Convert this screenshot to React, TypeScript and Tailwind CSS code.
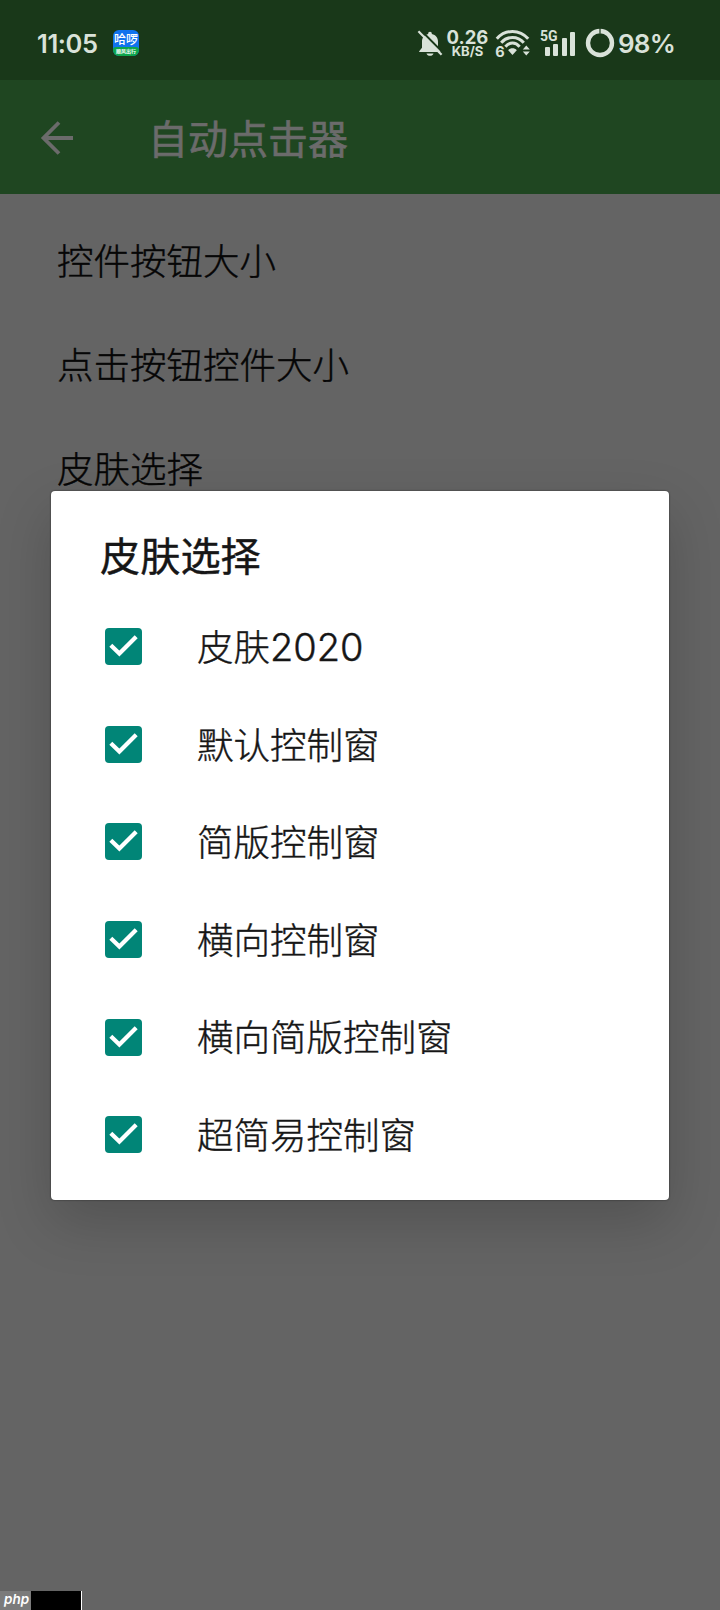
import { useState } from "react"

interface Skin {
    id: string;
    label: string;
    year?: string;
}

const settings = ["控件按钮大小", "点击按钮控件大小", "皮肤选择"];

const skins: Skin[] = [
    { id: "2020", label: "皮肤", year: "2020" },
    { id: "default", label: "默认控制窗" },
    { id: "simple", label: "简版控制窗" },
    { id: "horizontal", label: "横向控制窗" },
    { id: "horizontal-simple", label: "横向简版控制窗" },
    { id: "mini", label: "超简易控制窗" },
];

function BellOff() {
    return (
        <svg className="h-[27px] w-[26px] shrink-0" viewBox="0 0 26 27" fill="none">
            <path d="M13 1.800c1.100 0 1.800.7 1.800 1.700v.6c4 .9 6.200 3.900 6.200 7.700v6l2.400 3.400v.8H2.200v-.8l2.800-3.400v-6c0-3.800 2.200-6.800 6.200-7.700v-.6c0-1 .7-1.700 1.800-1.700z" fill="#d9e2d9" />
            <path d="M9.500 23.400h7c-.5 1.600-1.800 2.400-3.500 2.400s-3-.8-3.500-2.400z" fill="#d9e2d9" />
            <path d="M3.600 0L26 22.600" stroke="#193819" strokeWidth="2" />
            <path d="M1.400 1.300L24.600 24.700" stroke="#d9e2d9" strokeWidth="2.200" />
        </svg>
    )
}

function Wifi() {
    return (
        <svg className="h-[28px] w-[35px] shrink-0" viewBox="0 0 35 28" fill="none">
            <g stroke="#d9e2d9" strokeWidth="3">
                <path d="M1.800 9.800C10.400 0 24.600 0 33.200 9.800" />
                <path d="M6.200 13.800C12.400 6.600 22.600 6.600 28.800 13.800" />
                <path d="M10.400 17.800C14.400 12.800 20.600 12.800 24.600 17.800" />
            </g>
            <path d="M13.200 21.200c2.200-2.500 6.400-2.500 8.600 0L17.500 26z" fill="#d9e2d9" />
            <path d="M27.800 20.400l3.500-4 3.500 4zM27.800 22.400l3.500 4 3.500-4z" fill="#d9e2d9" />
            <text x="0.300" y="27.500" fontSize="14.500" fontWeight="700" fontFamily="Inter, sans-serif" fill="#d9e2d9">6</text>
        </svg>
    )
}

function Signal() {
    return (
        <div className="relative flex h-[25px] w-[35px] shrink-0 items-end justify-end gap-[3.500px]">
            <span className="absolute left-0 -top-[2px] font-['Roboto',sans-serif] text-[14px] leading-[14px] font-bold">5G</span>
            <span className="h-[9px] w-[5px] rounded-[1px] bg-[#d9e2d9]" />
            <span className="h-[12px] w-[5px] rounded-[1px] bg-[#d9e2d9]" />
            <span className="h-[18px] w-[5px] rounded-[1px] bg-[#d9e2d9]" />
            <span className="h-[24px] w-[5px] rounded-[1px] bg-[#d9e2d9]" />
        </div>
    )
}

function Battery() {
    return (
        <svg className="h-[30px] w-[30px] shrink-0" viewBox="0 0 30 30" fill="none">
            <circle cx="15" cy="15" r="12" stroke="#d9e2d9" strokeWidth="4.400" />
            <path d="M15 0v5.500" stroke="#193819" strokeWidth="1.200" />
        </svg>
    )
}

function StatusBar() {
    return (
        <div className="flex h-[80px] items-center bg-[#193819] pt-[6px] pr-[45px] pl-[37px] font-['Inter','Noto_Sans_CJK_SC',sans-serif] text-[#d9e2d9]">
            <span className="w-[76px] pt-[2px] text-[25.500px] font-semibold tracking-[-0.4px]">11:05</span>
            <div className="flex h-[26px] w-[26px] flex-col items-center overflow-hidden rounded-[6px] bg-[#1173ee]">
                <span className="pt-[3px] text-[12px] leading-[14px] font-medium whitespace-nowrap text-white">哈啰</span>
                <span className="h-[9px] w-full rounded-t-[3px] bg-[#0da64c] text-center text-[5px] leading-[9px] font-bold text-white">顺风出行</span>
            </div>
            <div className="ml-auto flex items-center">
                <BellOff />
                <div className="ml-[3px] flex w-[43px] flex-col items-center pt-[2px]">
                    <span className="text-[18.500px] leading-[15px] font-bold">0.26</span>
                    <span className="text-[13px] leading-[13px] font-bold">KB/S</span>
                </div>
                <div className="ml-[6px]"><Wifi /></div>
                <div className="ml-[10px]"><Signal /></div>
                <div className="ml-[10px]"><Battery /></div>
                <span className="ml-[3px] w-[57px] pt-px text-[26px] font-semibold tracking-[-0.8px]">98%</span>
            </div>
        </div>
    )
}

function CheckBox({ checked }: { checked: boolean }) {
    return (
        <svg className="h-[37px] w-[37px] shrink-0" viewBox="0 0 37 37" fill="none">
            {checked ? (
                <>
                    <rect width="37" height="37" rx="4" fill="#018577" />
                    <path d="M5.800 17.200L14.400 25.600L31.200 8.800" stroke="#fff" strokeWidth="4.200" />
                </>
            ) : (
                <rect x="2" y="2" width="33" height="33" rx="2" stroke="#757575" strokeWidth="4" />
            )}
        </svg>
    )
}

function SkinDialog() {
    const [selected, setSelected] = useState<string[]>(skins.map((skin) => skin.id));

    const toggle = (id: string) => {
        setSelected((prev) => prev.includes(id) ? prev.filter((item) => item !== id) : [...prev, id]);
    }

    return (
        <div className="absolute inset-x-0 top-[491px] px-[51px]">
            <div className="h-[708.500px] w-[618px] rounded-[4px] bg-white pt-[36px] text-[#161616] shadow-[0_0_2px_rgba(0,0,0,0.6),0_22px_56px_rgba(0,0,0,0.18)]">
                <h2 className="pl-[49px] text-[40.200px] leading-[60px] font-normal [-webkit-text-stroke:0.4px]">皮肤选择</h2>
                <div className="mt-[11px]">
                    {skins.map((skin) => (
                        <div key={skin.id} onClick={() => toggle(skin.id)} className="flex h-[97.600px] cursor-pointer items-center pl-[54px]">
                            <CheckBox checked={selected.includes(skin.id)} />
                            <span className="pt-[3px] pl-[55px] text-[36.500px] font-light [-webkit-text-stroke:0.4px]">
                                {skin.label}
                                {skin.year && <span className="text-[38px] leading-none">{skin.year}</span>}
                            </span>
                        </div>
                    ))}
                </div>
            </div>
        </div>
    )
}

function App() {
    return (
        <div className="relative flex h-[1610px] w-[720px] flex-col overflow-hidden bg-[#646464] font-['Inter','Noto_Sans_CJK_SC',sans-serif] select-none">
            <StatusBar />
            <header className="flex h-[114px] items-center bg-[#1f4621] text-[#6b6b6b]">
                <svg className="mt-[2px] ml-[40px] h-[34px] w-[34px]" viewBox="0 0 34 34" fill="none">
                    <path d="M33 17H4M19 1.500L3.500 17L19 32.500" stroke="currentColor" strokeWidth="3.800" />
                </svg>
                <h1 className="pt-[5px] pl-[74px] text-[40px] font-normal [-webkit-text-stroke:0.6px]">自动点击器</h1>
            </header>

            <div className="flex flex-1 flex-col pt-[16px] pl-[57px]">
                {settings.map((item) => (
                    <div key={item} className="flex h-[104.300px] items-center text-[36.500px] font-light text-[#060606] [-webkit-text-stroke:0.4px]">{item}</div>
                ))}
            </div>

            <SkinDialog />

            <div className="flex h-[19px] items-stretch">
                <span className="w-[31px] bg-[#7b7b7b] pl-[4px] text-[13.500px] leading-[16px] font-semibold text-white italic">php</span>
                <span className="w-[50px] bg-black" />
                <span className="w-px bg-white" />
            </div>
        </div>
    )
}

export default App
